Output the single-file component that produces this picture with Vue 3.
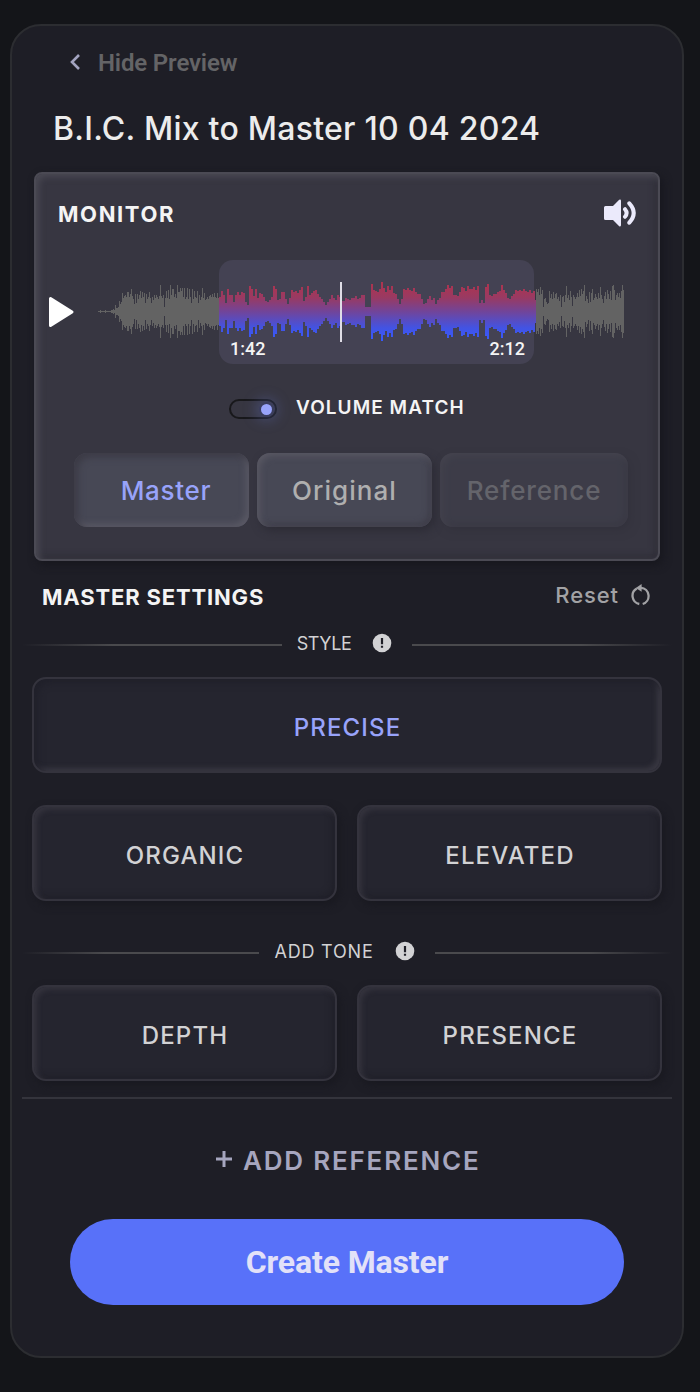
<template>
  <div class="page">
    <main class="card">
      <button class="back">
        <svg width="12" height="18" viewBox="0 0 12 18">
          <path d="M10 2 3 9l7 7" fill="none" stroke="#a3a4c0" stroke-width="2.6" />
        </svg>
        <span>Hide Preview</span>
      </button>
      <h1>B.I.C. Mix to Master 10 04 2024</h1>

      <section class="monitor">
        <div class="monitor__head">
          <h2>MONITOR</h2>
          <svg width="34" height="28" viewBox="0 0 34 28">
            <path d="M2.5 7H10l6.2-6.2Q18 0 18 2v24q0 2-1.8 1.2L10 21H2.5Q1 21 1 19.5V8.5Q1 7 2.5 7Z" fill="#ebeafb" />
            <path d="M22 10.2q3.2 3.8 0 7.6M26.3 4.3q8.8 9.7 0 19.4" fill="none" stroke="#ebeafb" stroke-width="4" stroke-linecap="round" />
          </svg>
        </div>

        <div class="player">
          <svg width="26" height="32" viewBox="0 0 26 32">
            <path d="M2.5 2.5v27L24 16Z" fill="#fff" stroke="#fff" stroke-width="3" stroke-linejoin="round" />
          </svg>
          <div class="player__track">
            <div class="player__region">
              <span>1:42</span>
              <span>2:12</span>
            </div>
            <svg class="player__wave" width="526" height="60" viewBox="0 0 526 60">
              <defs>
                <linearGradient id="wave" gradientUnits="userSpaceOnUse" x1="0" y1="2" x2="0" y2="58">
                  <stop offset="0" stop-color="#ad344f" />
                  <stop offset="0.25" stop-color="#983a63" />
                  <stop offset="0.5" stop-color="#70459b" />
                  <stop offset="0.78" stop-color="#4353e2" />
                  <stop offset="1" stop-color="#3659ff" />
                </linearGradient>
              </defs>
              <path :d="bars(intro, 0, 1)" fill="#636363" />
              <path :d="bars(selected, 121, 2)" fill="url(#wave)" />
              <path :d="bars(outro, 438, 1)" fill="#636363" />
              <rect x="242" y="0" width="2" height="60" fill="#dfdde6" />
            </svg>
          </div>
        </div>

        <div class="volume">
          <div class="volume__switch"><i></i></div>
          <span>VOLUME MATCH</span>
        </div>

        <div class="sources">
          <button class="sources__item sources__item--active">Master</button>
          <button class="sources__item">Original</button>
          <button class="sources__item sources__item--disabled">Reference</button>
        </div>
      </section>

      <div class="settings">
        <h2>MASTER SETTINGS</h2>
        <button class="settings__reset">
          <span>Reset</span>
          <svg width="20" height="22" viewBox="0 0 20 22">
            <path d="M5.8 4.6A8.3 8.3 0 0 0 8.3 20M11.7 20A8.3 8.3 0 0 0 10 3.8" fill="none" stroke="#a2a2a5" stroke-width="2.3" />
            <path d="M4.8 3.9 10.6 0v7.8Z" fill="#a2a2a5" />
          </svg>
        </button>
      </div>

      <div v-for="group in groups" :key="group.title" class="group" :class="group.name">
        <div class="group__title">
          <i class="line"></i>
          <span>{{ group.title }}</span>
          <svg width="20" height="20" viewBox="0 0 20 20">
            <circle cx="10" cy="10" r="9.3" fill="#d2d2d4" />
            <path d="M8.9 5h2.200v6.300H8.900zM8.900 12.800h2.200v2H8.900z" fill="#1e1e26" />
          </svg>
          <i class="line line--right"></i>
        </div>
        <div class="group__options">
          <button
            v-for="option in group.options"
            :key="option"
            class="option"
            :class="{ 'option--active': option === 'PRECISE' }"
          >
            {{ option }}
          </button>
        </div>
      </div>

      <hr />
      <button class="add">
        <svg width="18" height="18" viewBox="0 0 18 18">
          <path d="M9 1v16M1 9h16" stroke="#a6a6bf" stroke-width="3" />
        </svg>
        <span>ADD REFERENCE</span>
      </button>
      <button class="create">Create Master</button>
    </main>
  </div>
</template>

<script setup>
const groups = [
  { name: "style", title: "STYLE", options: ["PRECISE", "ORGANIC", "ELEVATED"] },
  { name: "tone", title: "ADD TONE", options: ["DEPTH", "PRESENCE"] },
];

// half heights of the waveform, one value per bar
const intro = [
  1, 1, 2, 1, 1, 1, 1, 2, 1, 1, 1, 1, 1, 2, 2, 3, 2, 7, 4, 4, 5, 11, 8, 10, 19, 14, 16, 17, 15, 20,
  20, 15, 18, 23, 16, 13, 8, 18, 9, 18, 13, 17, 21, 14, 20, 15, 19, 9, 18, 13, 15, 20, 14, 9, 15, 12,
  17, 14, 17, 15, 13, 16, 27, 16, 14, 17, 5, 14, 21, 14, 22, 13, 27, 17, 23, 23, 15, 18, 14, 27, 20,
  20, 24, 21, 24, 15, 24, 13, 15, 24, 13, 23, 15, 9, 23, 13, 21, 15, 14, 21, 9, 17, 12, 15, 24, 14,
  19, 12, 13, 15, 13, 16, 17, 15, 18, 15, 19, 15, 14, 19, 14,
];
const selected = [
  15, 21, 17, 9, 23, 17, 17, 10, 17, 20, 17, 20, 19, 10, 7, 26, 23, 16, 23, 14, 19, 18, 15, 11, 10,
  12, 15, 26, 23, 12, 13, 20, 20, 13, 8, 14, 22, 20, 21, 19, 22, 25, 11, 15, 26, 17, 19, 21, 22, 18,
  15, 13, 10, 7, 10, 13, 17, 14, 12, 17, 15, 11, 11, 14, 13, 12, 14, 14, 16, 13, 14, 17, 17, 5, 5, 5,
  28, 22, 21, 20, 23, 30, 24, 20, 26, 22, 26, 19, 18, 13, 8, 13, 23, 22, 24, 22, 21, 24, 20, 18, 18,
  13, 8, 9, 13, 16, 12, 14, 8, 12, 14, 20, 20, 23, 27, 24, 26, 17, 17, 16, 20, 25, 24, 21, 26, 23, 23,
  25, 22, 26, 9, 12, 9, 25, 28, 17, 16, 18, 18, 20, 21, 27, 22, 19, 14, 13, 16, 18, 22, 21, 22, 21, 23,
  21, 20, 22, 19, 21, 12, 9,
];
const outro = [
  23, 20, 23, 17, 25, 18, 22, 5, 13, 14, 10, 8, 9, 21, 14, 18, 13, 20, 14, 18, 19, 13, 15, 11, 17, 5,
  15, 16, 10, 17, 26, 14, 17, 12, 21, 15, 6, 17, 15, 13, 15, 19, 15, 22, 16, 23, 18, 21, 27, 11, 16,
  13, 9, 20, 10, 19, 23, 12, 14, 18, 15, 13, 19, 14, 25, 17, 13, 9, 16, 20, 13, 22, 18, 13, 21, 12, 26,
  27, 22, 12, 17, 19, 15, 19, 14, 21, 27, 22,
];

function bars(heights, start, width) {
  return heights
    .map((h, i) => `M${start + i * width} ${30 - h}h${width}v${h * 2 - 1}h-${width}z`)
    .join("");
}
</script>

<style>
body {
  margin: 0;
  background: #141519;
}
</style>

<style scoped>
.page {
  display: flow-root;
  min-height: 100vh;
  font-family: Inter, "Liberation Sans", sans-serif;
  background: #141519;
}
.card {
  box-sizing: border-box;
  display: flex;
  flex-direction: column;
  width: 674px;
  height: 1334px;
  margin: 24px 0 0 10px;
  padding: 0 10px;
  border: 2px solid #2c2d31;
  border-radius: 31px;
  background: #1e1e26;
}
button {
  display: flex;
  align-items: center;
  justify-content: center;
  box-sizing: border-box;
  margin: 0;
  padding: 0;
  border: none;
  background: none;
  font-family: inherit;
  white-space: nowrap;
}
h1,
h2 {
  margin: 0;
  white-space: nowrap;
}
.back {
  align-self: flex-start;
  gap: 17px;
  height: 28px;
  margin: 22px 0 0 47px;
  font: 600 24px/28px Roboto, sans-serif;
  letter-spacing: -0.15px;
  color: #646466;
}
.back span {
  padding-top: 2px;
}
h1 {
  height: 44px;
  margin: 31px 0 0 31px;
  font-size: 32px;
  line-height: 44px;
  font-weight: 500;
  letter-spacing: 0.26px;
  color: #ececec;
}
.monitor {
  box-sizing: border-box;
  width: 626px;
  height: 389px;
  margin: 21px 0 0 12px;
  border: 2px solid #4b4a54;
  border-radius: 8px;
  background: #373641;
  box-shadow: inset 3px 3px 6px #4b4a54, inset -3px -3px 6px #2f2e38, 3px 4px 8px #17171e;
}
.monitor__head {
  display: flex;
  align-items: center;
  justify-content: space-between;
  height: 30px;
  margin: 24px 21px 0 22px;
}
h2 {
  font-size: 22px;
  line-height: 30px;
  font-weight: 700;
  letter-spacing: 0.83px;
  color: #f4f4f4;
}
.monitor h2 {
  padding-top: 2px;
  letter-spacing: 1.6px;
}
.player {
  display: flex;
  align-items: center;
  gap: 24px;
  height: 104px;
  margin: 32px 0 0 12px;
}
.player__track {
  position: relative;
  width: 526px;
  height: 104px;
}
.player__region {
  box-sizing: border-box;
  display: flex;
  align-items: flex-end;
  justify-content: space-between;
  width: 315px;
  height: 104px;
  margin-left: 121px;
  padding: 0 9px 4px 11px;
  border-radius: 14px;
  background: #444253;
  font: 500 18px/22px Roboto, sans-serif;
  color: #f4f4f4;
}
.player__wave {
  position: absolute;
  left: 0;
  top: 22px;
}
.volume {
  display: flex;
  align-items: center;
  gap: 19px;
  height: 24px;
  margin: 32px 0 0 193px;
  font-size: 19px;
  line-height: 22px;
  font-weight: 600;
  letter-spacing: 1.05px;
  color: #f4f4f4;
}
.volume__switch {
  box-sizing: border-box;
  display: flex;
  align-items: center;
  justify-content: flex-end;
  width: 48px;
  height: 20px;
  margin-top: 2px;
  padding-right: 3px;
  border: 2px solid #18181b;
  border-radius: 10px;
}
.volume__switch i {
  width: 11px;
  height: 11px;
  border-radius: 50%;
  background: #98a3fa;
  box-shadow: 0 0 0 2px #3a3d5c, 0 0 14px 5px rgba(100, 115, 200, 0.38);
}
.sources {
  display: flex;
  gap: 8px;
  margin: 33px 0 0 38px;
}
.sources__item {
  width: 175px;
  height: 74px;
  padding-top: 2px;
  border-radius: 13px;
  background: #474855;
  box-shadow: inset 3px 3px 6px #595863, inset -3px -3px 6px #3e3d49, 3px 4px 8px #2d2c36;
  font-size: 26px;
  line-height: 34px;
  font-weight: 500;
  letter-spacing: 1.05px;
  color: #afafaf;
}
.sources__item--active {
  padding-left: 9px;
  box-shadow: inset 4px 4px 7px #3c3b46, inset -3px -3px 6px #5c5b67;
  letter-spacing: 0.7px;
  color: #98a3fa;
}
.sources__item--disabled {
  width: 188px;
  letter-spacing: 0.85px;
  opacity: 0.38;
}
.settings {
  display: flex;
  align-items: center;
  justify-content: space-between;
  height: 30px;
  margin: 21px 21px 0 20px;
}
.settings__reset {
  gap: 12px;
  margin-top: -4px;
  font-size: 22px;
  line-height: 30px;
  font-weight: 500;
  letter-spacing: 0.9px;
  color: #a2a2a5;
}
.group {
  margin-top: 20px;
}
.group__title {
  display: flex;
  align-items: center;
  height: 22px;
  font-size: 18px;
  line-height: 22px;
  color: #d2d2d4;
}
.group__title span {
  margin-left: 15px;
  padding-top: 2px;
  letter-spacing: -0.4px;
}
.tone .group__title span {
  letter-spacing: 0.8px;
}
.group__title svg {
  margin: 0 20px 0 21px;
}
.line {
  flex: 1;
  height: 2px;
  margin-top: 3px;
  background: linear-gradient(to right, rgba(74, 74, 77, 0), #4a4a4d 35%);
}
.line--right {
  background: linear-gradient(to left, rgba(74, 74, 77, 0), #4a4a4d 35%);
}
.group__options {
  display: grid;
  grid-template-columns: 1fr 1fr;
  gap: 32px 20px;
  margin: 23px 10px 0;
}
.option {
  height: 96px;
  padding: 5px 0 0 1px;
  border: 2px solid #34333d;
  border-radius: 14px;
  background: #25252f;
  box-shadow: inset 3px 3px 5px #34333d, inset -3px -3px 6px #202029, 3px 4px 8px #191920;
  font-size: 24px;
  line-height: 30px;
  font-weight: 500;
  letter-spacing: 1.15px;
  color: #d2d2d4;
}
.option--active {
  grid-column: 1 / 3;
  box-shadow: inset 4px 4px 7px #20202a, inset -3px -3px 5px #3a3943;
  color: #98a3fa;
}
.tone {
  margin-top: 39px;
}
hr {
  width: 650px;
  height: 2px;
  margin: 16px 0 0;
  border: none;
  background: #34343c;
}
.add {
  align-self: flex-start;
  gap: 10px;
  height: 34px;
  margin: 45px 0 0 193px;
  font-size: 26px;
  line-height: 34px;
  font-weight: 600;
  letter-spacing: 1.8px;
  color: #a6a6bf;
}
.add svg {
  margin-bottom: 5px;
}
.create {
  width: 554px;
  height: 86px;
  margin: 41px 0 0 48px;
  border-radius: 43px;
  background: #5871f9;
  font: 700 32px/40px Roboto, sans-serif;
  letter-spacing: -0.12px;
  color: #e2e1f8;
}
</style>
